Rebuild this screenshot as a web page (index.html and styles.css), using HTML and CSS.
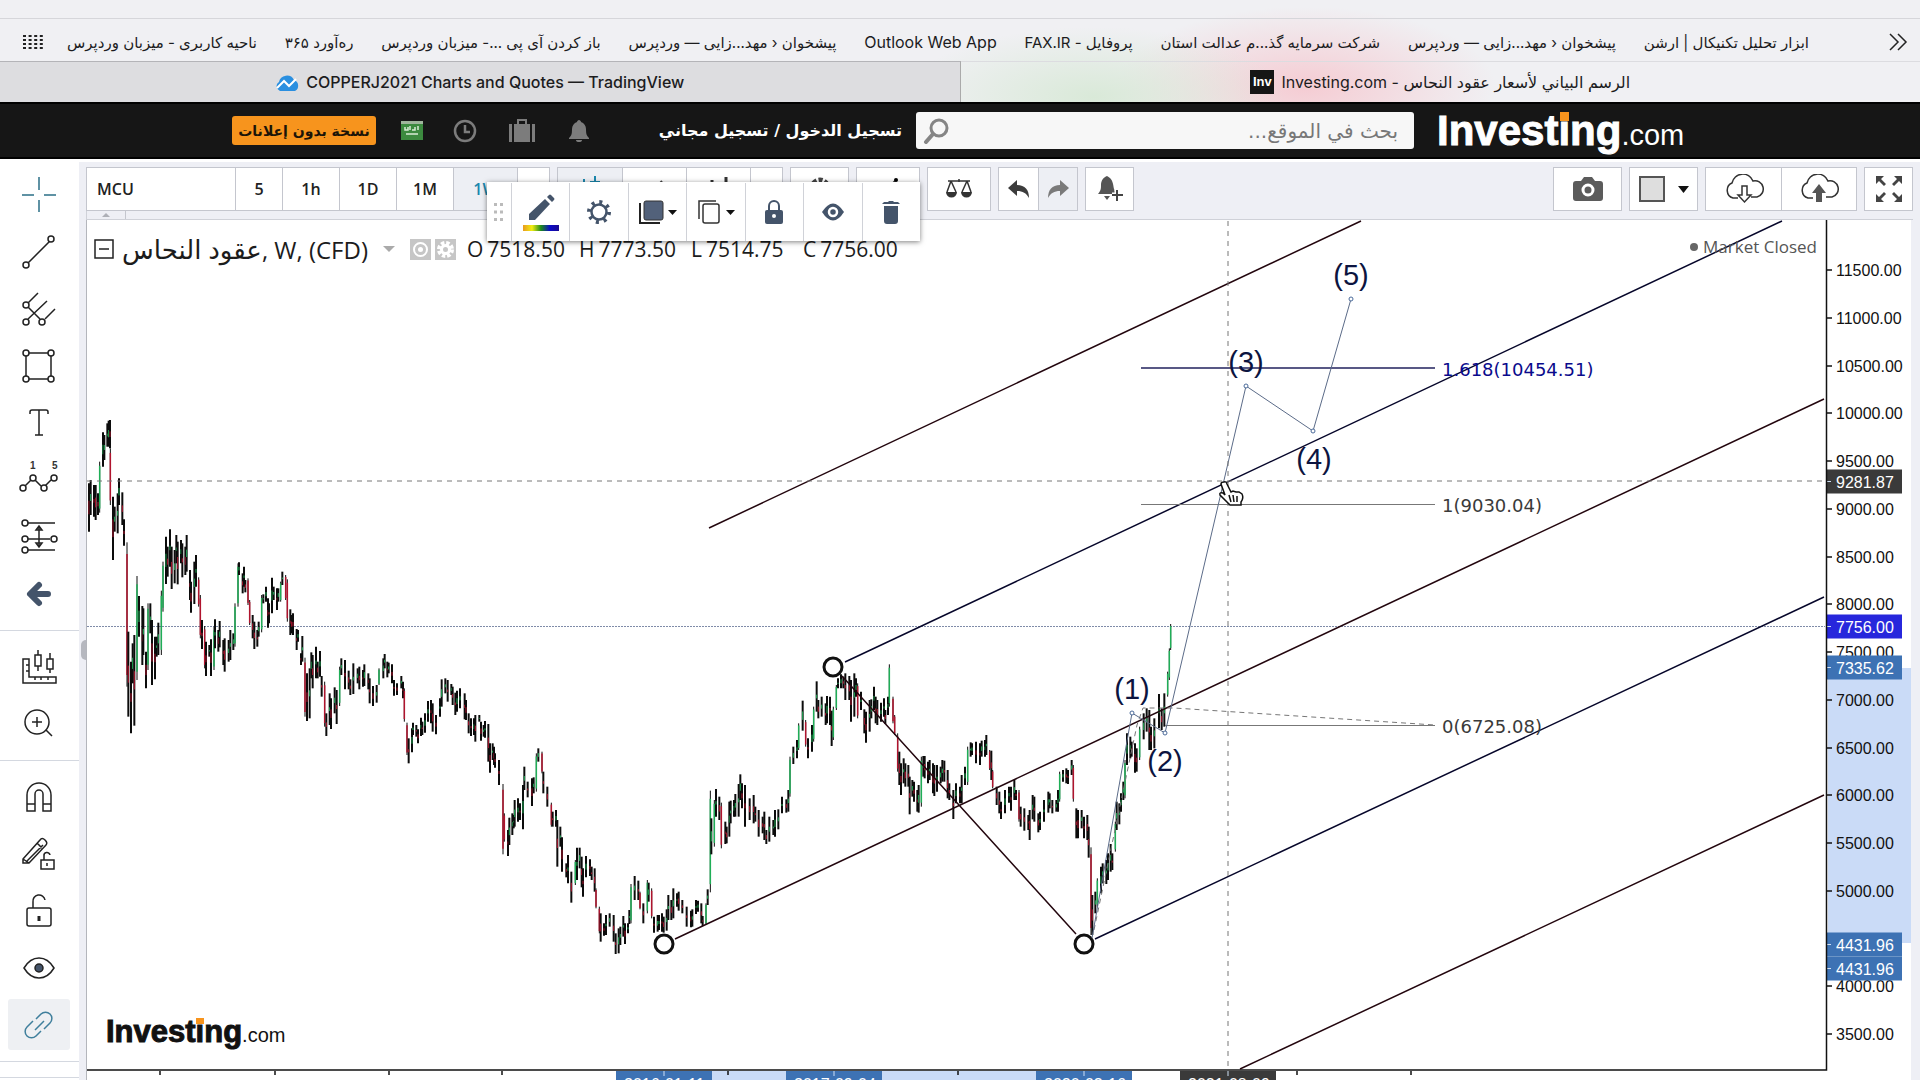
FILE: index.html
```
<!DOCTYPE html>
<html lang="ar">
<head>
    <meta charset="UTF-8">
    <title>Investing.com</title>
    <meta name="viewport" content="width=device-width">
    <link rel="stylesheet" href="styles.css">
</head>

<body>

<div class="browser">
    <nav class="bookmarks">
        <svg class="apps" width="22" height="16" viewBox="0 0 22 16"><path d="M1 2h20M1 6h20M1 10h20M1 14h20" stroke="#222" stroke-width="2" stroke-dasharray="3 2.6"/></svg>
        <div class="links">
            <a href="#" dir="rtl">ناحیه کاربری - میزبان وردپرس</a>
            <a href="#" dir="rtl">ره‌آورد ۳۶۵</a>
            <a href="#" dir="rtl">باز کردن آی پی ...- میزبان وردپرس</a>
            <a href="#" dir="rtl">پیشخوان ‹ مهد...زایی — وردپرس</a>
            <a href="#" class="latin">Outlook Web App</a>
            <a href="#" dir="rtl">پروفایل - FAX.IR</a>
            <a href="#" dir="rtl">شرکت سرمایه گذ...م عدالت استان</a>
            <a href="#" dir="rtl">پیشخوان ‹ مهد...زایی — وردپرس</a>
            <a href="#" dir="rtl">ابزار تحلیل تکنیکال | ارشن</a>
        </div>
        <svg class="more" width="20" height="18" viewBox="0 0 20 18"><path d="M2 1l8 8-8 8M10 1l8 8-8 8" fill="none" stroke="#222" stroke-width="1.5"/></svg>
    </nav>
    <div class="tabs">
        <a href="#" class="tab back">
            <svg width="24" height="20" viewBox="0 0 24 20"><path d="M5 19a5 5 0 0 1-1-9A8 8 0 0 1 19 8a6 6 0 0 1 1 11z" fill="#2a8fe0"/><path d="M2 16l7-7 5 5 7-7" fill="none" stroke="#fff" stroke-width="2"/></svg>
            <span>COPPERJ2021 Charts and Quotes — TradingView</span>
        </a>
        <a href="#" class="tab">
            <b class="inv">Inv</b>
            <span dir="rtl">الرسم البياني لأسعار عقود النحاس - Investing.com</span>
        </a>
    </div>
</div>

<header>
    <button class="noads">نسخة بدون إعلانات</button>
    <svg class="flag" width="22" height="19" viewBox="0 0 22 19"><path fill="#3c8a3f" d="M0 0h22v19H0z"/><path fill="#9fb59c" d="M0 0h22v3H0z"/><path d="M4 6v3h3V6M9 9V5M11 9h3V6M17 5v4M5 13h12" stroke="#d9ecd6" stroke-width="1.5" fill="none"/></svg>
    <svg class="clock" width="24" height="24" viewBox="0 0 24 24"><circle cx="12" cy="12" r="10" fill="none" stroke="#7c7c7c" stroke-width="2.5"/><path d="M12 6v7h5" fill="none" stroke="#7c7c7c" stroke-width="2.5"/></svg>
    <svg class="case" width="26" height="24" viewBox="0 0 26 24"><path d="M0 5h3v18H0zM5 5h16v18H5zM23 5h3v18h-3z" fill="#7c7c7c"/><path d="M9 5V1h8v4" fill="none" stroke="#7c7c7c" stroke-width="2"/></svg>
    <svg class="bell" width="22" height="24" viewBox="0 0 22 24"><path d="M11 1c1 0 2 1 2 2 3 1 5 4 5 7 0 6 1 7 3 9v1H1v-1c2-2 3-3 3-9 0-3 2-6 5-7 0-1 1-2 2-2zM8 21h6a3 2 0 0 1-6 0z" fill="#7c7c7c"/></svg>
    <a href="#" class="login" dir="rtl">تسجيل الدخول / تسجيل مجاني</a>
    <div class="search">
        <svg width="26" height="26" viewBox="0 0 26 26"><circle cx="16" cy="10" r="8" fill="none" stroke="#858585" stroke-width="3"/><path d="M10 16l-7 8" stroke="#858585" stroke-width="4" stroke-linecap="round"/></svg>
        <input type="text" dir="rtl" placeholder="بحث في الموقع..." aria-label="بحث في الموقع">
    </div>
    <a href="#" class="logo">Invest<span class="dot">i</span>ng<small>.com</small></a>
</header>

<div class="main">

<div class="tools">
    <div class="toolgroup">
        <button aria-label="cross"><svg viewBox="0 0 40 40"><path d="M20 2v13M20 25v12M3 20h12M25 20h12" stroke="#2b6f86" stroke-width="1.5"/></svg></button>
        <button aria-label="line"><svg viewBox="0 0 40 40"><path d="M9 31L31 9" /><circle cx="7" cy="33" r="3"/><circle cx="32" cy="7" r="3"/></svg></button>
        <button aria-label="fork"><svg viewBox="0 0 40 40"><path d="M9 14L19 4M9 30L28 12M9 18l12 12M26 30l10-10"/><circle cx="7" cy="16" r="3"/><circle cx="7" cy="33" r="3"/><circle cx="23" cy="33" r="3"/></svg></button>
        <button aria-label="rectangle"><svg viewBox="0 0 40 40"><path d="M10 7h19M10 33h19M7 10v20M32 10v20"/><circle cx="7" cy="7" r="3"/><circle cx="32" cy="7" r="3"/><circle cx="7" cy="33" r="3"/><circle cx="32" cy="33" r="3"/></svg></button>
        <button aria-label="text"><svg viewBox="0 0 40 40"><path d="M11 11V9q0-2 2-2h14q2 0 2 2v2M20 7v25M16 32h8"/></svg></button>
        <button aria-label="waves"><svg viewBox="0 0 40 40"><path d="M6 26l6-6M16 20l6 6M26 26l6-6"/><circle cx="4" cy="28" r="3"/><circle cx="14" cy="18" r="3"/><circle cx="25" cy="28" r="3"/><circle cx="35" cy="18" r="3"/><text x="11" y="9">1</text><text x="33" y="9">5</text></svg></button>
        <button aria-label="projection"><svg viewBox="0 0 40 40"><path d="M9 6h27M9 22h22M9 33h27M20 10v19M17 13l3-4 3 4zM17 26l3 4 3-4z"/><circle cx="6" cy="6" r="3"/><circle cx="6" cy="22" r="3"/><circle cx="35" cy="22" r="3"/><circle cx="6" cy="33" r="3"/></svg></button>
        <button aria-label="arrow"><svg viewBox="0 0 40 40"><path d="M20 11L11 20l9 9M12 20h17" stroke="#44546a" stroke-width="6" stroke-linecap="round" stroke-linejoin="round"/></svg></button>
    </div>
    <div class="toolgroup">
        <button aria-label="measure"><svg viewBox="0 0 40 40"><path d="M4 12h6v18h27v6H4zM10 18H7M10 24H7M16 30v3M22 30v3M29 30v3M19 3v5M19 19v5M16 8h6v11h-6zM31 6v6M31 22v4M28 12h6v10h-6z"/></svg></button>
        <button aria-label="zoom"><svg viewBox="0 0 40 40"><circle cx="18" cy="18" r="12"/><path d="M18 13v10M13 18h10M27 26l6 6"/></svg></button>
    </div>
    <div class="toolgroup">
        <button aria-label="magnet"><svg viewBox="0 0 40 40"><path d="M8 34V18a12 12 0 0 1 24 0v16h-8V17a4 4 0 0 0-8 0v17zM8 27h8M24 27h8"/></svg></button>
        <button aria-label="keep drawing"><svg viewBox="0 0 40 40"><path d="M4 25L21 6q2-3 5 0t1 5L10 29H4zM4 25l6 4M18 9l6 6M8 27L24 11M22 26h13v9H22zM25 26v-4a3 3 0 0 1 6-1M28 29v3"/></svg></button>
        <button aria-label="lock"><svg viewBox="0 0 40 40"><path d="M8 19q0-2 2-2h20q2 0 2 2v14q0 2-2 2H10q-2 0-2-2zM14 17v-6a6 6 0 0 1 12-2"/><path d="M20 25v5" stroke-width="3"/></svg></button>
        <button aria-label="hide"><svg viewBox="0 0 40 40"><path d="M5 20q6-10 15-10t15 10q-6 10-15 10T5 20z"/><circle cx="20" cy="20" r="4" style="fill:#44546a"/></svg></button>
        <button aria-label="link" class="on"><svg viewBox="0 0 40 40"><path d="M16 25l9-9M17 14l5-5a6 6 0 0 1 9 9l-6 6M22 26l-5 5a6 6 0 0 1-9-9l6-6" stroke="#3f7f9c"/></svg></button>
    </div>
    <div class="toolgroup"></div>
</div>

<div class="work">
    <div class="topbar">
        <div class="group">
            <input class="symbol" value="MCU" aria-label="symbol">
            <button class="w47">5</button>
            <button class="w57">1h</button>
            <button class="w57">1D</button>
            <button class="w57">1M</button>
            <button class="w64 active">1W</button>
            <button class="w32" aria-label="more"></button>
        </div>
        <div class="group">
            <button class="w64 active" aria-label="candles"><svg width="26" height="30" viewBox="0 0 26 30"><path d="M7 5v18M18 2v26M14 8h8v12h-8z" fill="none" stroke="#1b87ad" stroke-width="2"/></svg></button>
            <button class="w64" aria-label="compare"><svg width="26" height="30" viewBox="0 0 26 30"><path d="M3 22l9-6 8-9" fill="none" stroke="#444" stroke-width="2"/></svg></button>
            <button class="w64" aria-label="indicators"><svg width="26" height="30" viewBox="0 0 26 30"><path d="M6 6v18M13 11v13M20 3v21" fill="none" stroke="#333" stroke-width="3"/></svg></button>
            <button class="w32" aria-label="more"></button>
        </div>
        <div class="group">
            <button class="w57" aria-label="settings"><svg width="26" height="30" viewBox="0 0 26 30"><circle cx="13" cy="14" r="8" fill="none" stroke="#444" stroke-width="5" stroke-dasharray="4 2"/></svg></button>
        </div>
        <div class="group">
            <button class="w62" aria-label="templates"><svg width="26" height="30" viewBox="0 0 26 30"><path d="M3 22l9-6 8-9" fill="none" stroke="#444" stroke-width="2"/><circle cx="21" cy="6" r="2"/></svg></button>
        </div>
        <div class="group">
            <button class="w62" aria-label="scales"><svg width="28" height="24" viewBox="0 0 28 24"><path d="M3 4h22M14 2v3M6 4L2 15M6 4l5 11M22 4l-5 11M22 4l4 11" fill="none" stroke="#333" stroke-width="1.5"/><path d="M1 15h11a5 5 0 0 1-11 0zM16 15h11a5 5 0 0 1-11 0z" fill="#333"/></svg></button>
        </div>
        <div class="group">
            <button class="w39" aria-label="undo"><svg width="24" height="20" viewBox="0 0 24 20"><path d="M10 1v5c8 0 12 5 12 13-3-5-6-7-12-7v5L1 9z" fill="#3c3c3c"/></svg></button>
            <button class="w39 active" aria-label="redo"><svg width="24" height="20" viewBox="0 0 24 20"><path d="M14 1v5C6 6 2 11 2 19c3-5 6-7 12-7v5l9-8z" fill="#7a7a7a"/></svg></button>
        </div>
        <div class="group">
            <button class="w47" aria-label="add alert"><svg width="28" height="26" viewBox="0 0 28 26"><path d="M11 0c6 3 6 8 7 13l2 5H2c3-4 3-5 3-9 0-5 3-8 6-9zM8 20h6l-3 4z" fill="#555"/><path d="M21 14v11M16 19h11" stroke="#fff" stroke-width="5"/><path d="M21 14v11M16 19h11" stroke="#444" stroke-width="2"/></svg></button>
        </div>
        <div class="group push">
            <button class="w67" aria-label="snapshot"><svg width="30" height="24" viewBox="0 0 30 24"><path d="M3 4h5l3-4h8l3 4h5q3 0 3 3v14q0 3-3 3H3q-3 0-3-3V7q0-3 3-3z" fill="#5b5b5b"/><circle cx="15" cy="13" r="5" fill="none" stroke="#fff" stroke-width="3"/></svg></button>
        </div>
        <div class="group">
            <button class="w67" aria-label="background"><svg width="50" height="26" viewBox="0 0 50 26"><path d="M1 1h24v24H1z" fill="#dedede" stroke="#555" stroke-width="2"/><path d="M39 10h11l-5.500 7z" fill="#111"/></svg></button>
        </div>
        <div class="group">
            <button class="w75" aria-label="load"><svg width="40" height="30" viewBox="0 0 40 30"><path d="M14 24H9a8 8 0 0 1-1-15 11 11 0 0 1 21-2 8 8 0 0 1 4 16h-6" fill="none" stroke="#333" stroke-width="1.5"/><path d="M18 12h5v9h4l-6.500 7L14 21h4z" fill="#fff" stroke="#333" stroke-width="1.500"/></svg></button>
            <button class="w75" aria-label="save"><svg width="40" height="30" viewBox="0 0 40 30"><path d="M14 24H9a8 8 0 0 1-1-15 11 11 0 0 1 21-2 8 8 0 0 1 4 16h-6" fill="none" stroke="#333" stroke-width="1.5"/><path d="M20 10l7 9h-4v9h-6v-9h-4z" fill="#555"/></svg></button>
        </div>
        <div class="group">
            <button class="w47" aria-label="full screen"><svg width="28" height="28" viewBox="0 0 28 28"><path d="M1 9V1h8L6 4l5 5-2 2-5-5zM27 9V1h-8l3 3-5 5 2 2 5-5zM1 19v8h8l-3-3 5-5-2-2-5 5zM27 19v8h-8l3-3-5-5 2-2 5 5z" fill="#444"/></svg></button>
        </div>
    </div>
    <div class="fold"><button aria-label="collapse"></button></div>
    <span class="handle"></span>

    <div class="chart">
        <svg id="chart" viewBox="87 220 1824 860" preserveAspectRatio="xMinYMin slice">
            <rect class="range" x="1828" y="668" width="83" height="275"/>
            <path class="range" d="M712 1071h74v9h-74zM882 1071h155v9H882z"/>
            <g id="axis"></g>
            <path d="M87 626.5h1738" stroke="#7f8ba8" stroke-dasharray="2 1"/>
            <g id="bars"></g>

            <g class="channel">
                <path class="red" d="M709 528L1361 221M675 939L1824 399M1240 1069L1824 795M842 676L1076 934"/>
                <path class="blue" d="M845 662L1782 221M1095 939L1824 597"/>
            </g>
            <g class="handles">
                <circle cx="833" cy="667" r="9"/><circle cx="664" cy="944" r="9"/><circle cx="1084" cy="944" r="9"/>
            </g>

            <path class="level blue" d="M1141 368h294"/>
            <path class="level" d="M1141 504.500h294M1165 725.500h270"/>
            <path class="dash" d="M1094 930L1137 725l6-17h31L1435 725"/>
            <g class="leveltext">
                <text x="1442" y="376" fill="#0a0a8c">1.618(10454.51)</text>
                <text x="1442" y="512">1(9030.04)</text>
                <text x="1442" y="733">0(6725.08)</text>
            </g>

            <path class="wave" d="M1092 938L1132 713l33 20 81-347 67 45 38-132"/>
            <g class="wavedots"><circle cx="1132" cy="713" r="2"/><circle cx="1165" cy="733" r="2"/><circle cx="1246" cy="386" r="2"/><circle cx="1313" cy="431" r="2"/><circle cx="1351" cy="299" r="2"/></g>
            <g class="wavetext">
                <text x="1132" y="699">(1)</text>
                <text x="1165" y="771">(2)</text>
                <text x="1246" y="372">(3)</text>
                <text x="1314" y="469">(4)</text>
                <text x="1351" y="285">(5)</text>
            </g>

            <path class="cross" d="M87 481h1738M1228 221v849"/>
            <path d="M1224 482q2-1 3 2l4 8 2-1 3 1 3 0 3 2q2 4-1 8v3h-11l-10-10q-1-3 3-2l2 2-4-11q0-2 3-2zM1229 495l2 7M1233 495l1 7M1237 496v6" fill="#fff" stroke="#111" stroke-width="1.500"/>
        </svg>

        <div class="legend">
            <svg width="20" height="20" viewBox="0 0 20 20"><path d="M1 1h18v18H1zM5 10h10" fill="none" stroke="#222" stroke-width="1.500"/></svg>
            <span class="name"><bdi>عقود النحاس</bdi>, W, (CFD)</span>
            <i class="caret"></i>
            <svg class="eye" width="21" height="21" viewBox="0 0 21 21"><path fill="#c6c6c6" d="M0 0h21v21H0z"/><circle cx="10.500" cy="10.500" r="6.500" fill="none" stroke="#fff" stroke-width="2"/><circle cx="10.500" cy="10.500" r="2.500" fill="#fff"/></svg>
            <svg class="gear" width="21" height="21" viewBox="0 0 21 21"><path fill="#c6c6c6" d="M0 0h21v21H0z"/><circle cx="10.500" cy="10.500" r="6" fill="none" stroke="#fff" stroke-width="5" stroke-dasharray="3 1.700"/><circle cx="10.500" cy="10.500" r="4" fill="none" stroke="#fff" stroke-width="3"/></svg>
            <span class="val"><b>O</b>7518.50</span>
            <span class="val"><b>H</b>7773.50</span>
            <span class="val"><b>L</b>7514.75</span>
            <span class="val"><b>C</b>7756.00</span>
        </div>
        <div class="closed"><i></i>Market Closed</div>
        <div class="logo dark">Invest<span class="dot">i</span>ng<small>.com</small></div>
    </div>

    <div class="floating">
        <svg class="grip" width="10" height="18" viewBox="0 0 10 18"><path d="M0 1.500h10M0 9h10M0 16.500h10" stroke="#bbb" stroke-width="3" stroke-dasharray="3 3"/></svg>
        <button aria-label="colour"><svg width="36" height="38" viewBox="0 0 36 38"><defs><linearGradient id="rb"><stop offset="0" stop-color="#e89a20"/><stop offset=".25" stop-color="#f2ee10"/><stop offset=".5" stop-color="#1c8a1c"/><stop offset=".75" stop-color="#0a0ac8"/><stop offset="1" stop-color="#1a0a90"/></linearGradient></defs><path d="M6 27v-6L22 6l5 5-15 16zM24 4l2-2q1-1 2 0l3 3q1 1 0 2l-2 2z" fill="#44546a"/><path d="M0 32h36v6H0z" fill="url(#rb)"/></svg></button>
        <button aria-label="format"><svg width="26" height="26" viewBox="0 0 26 26"><circle cx="13" cy="13" r="7.500" fill="none" stroke="#44546a" stroke-width="2.500"/><circle cx="13" cy="13" r="10" fill="none" stroke="#44546a" stroke-width="4" stroke-dasharray="3 4.850"/></svg></button>
        <button aria-label="order"><svg width="38" height="24" viewBox="0 0 38 24"><path d="M1 3v20h20" fill="none" stroke="#222" stroke-width="2"/><rect x="5" y="1" width="19" height="19" rx="2" fill="#52617a" stroke="#333"/><path d="M29 10h9l-4.500 5z" fill="#111"/></svg></button>
        <button aria-label="clone"><svg width="38" height="24" viewBox="0 0 38 24"><path d="M2 19V1h17" fill="none" stroke="#333" stroke-width="1.500"/><rect x="6" y="4" width="16" height="19" rx="2" fill="#fff" stroke="#333" stroke-width="1.500"/><path d="M29 10h9l-4.500 5z" fill="#111"/></svg></button>
        <button aria-label="lock"><svg width="20" height="24" viewBox="0 0 20 24"><path d="M5 10V6a5 5 0 0 1 10 0v4" fill="none" stroke="#44546a" stroke-width="2"/><rect x="1" y="10" width="18" height="14" rx="2" fill="#44546a"/><circle cx="10" cy="16" r="2" fill="#fff"/></svg></button>
        <button aria-label="hide"><svg width="24" height="18" viewBox="0 0 24 18"><path d="M1 9q11-17 22 0-11 17-22 0z" fill="#44546a"/><circle cx="12" cy="9" r="4" fill="none" stroke="#fff" stroke-width="2.500"/></svg></button>
        <button aria-label="delete"><svg width="20" height="24" viewBox="0 0 20 24"><path d="M1 4l2-2h4l1-1h4l1 1h4l2 2zM3 6h14v15q0 3-3 3H6q-3 0-3-3z" fill="#44546a"/></svg></button>
    </div>
</div>
</div>

<script>

var NS = 'http://www.w3.org/2000/svg';
var axis = document.getElementById('axis');
var bars = document.getElementById('bars');

function add(parent, tag, attrs, text)
{
    var el = document.createElementNS(NS, tag);
    for (var k in attrs) el.setAttribute(k, attrs[k]);
    if (text) el.textContent = text;
    parent.appendChild(el);
}

// price scale
for (var p = 11500, y = 270; p >= 3500; p -= 500, y += 47.75)
{
    var ty = Math.round(y);
    add(axis, 'path', {d: 'M1827 ' + ty + 'h5', 'class': 'line'});
    if (p != 4500) add(axis, 'text', {x: 1836, y: ty + 6}, p + '.00');
}

var tags = [[481.5, '9281.87', '#3a3a3a'], [626.5, '7756.00', '#2727dc'], [667.5, '7335.62', '#3d72b4'],
            [944.5, '4431.96', '#3d72b4'], [968.5, '4431.96', '#3d72b4']];
tags.forEach(function (t)
{
    add(axis, 'rect', {x: 1827, y: t[0] - 12, width: 75, height: 24, fill: t[2]});
    add(axis, 'text', {x: 1836, y: t[0] + 6, 'class': 'tag'}, t[1]);
    add(axis, 'path', {d: 'M1827 ' + t[0] + 'h4', stroke: '#cfe0f5'});
});

// time scale
var dates = [[616, '2016-01-11', '#3d72b4'], [786, '2017-09-04', '#3d72b4'], [1036, '2020-03-16', '#3d72b4'], [1180, '2021-08-09', '#3a3a3a']];
dates.forEach(function (d)
{
    add(axis, 'rect', {x: d[0], y: 1071, width: 96, height: 24, fill: d[2]});
    add(axis, 'path', {d: 'M' + (d[0] + 48) + ' 1071v5', stroke: '#cfe0f5'});
    add(axis, 'text', {x: d[0] + 8, y: 1090, 'class': 'tag'}, d[1]);
});
[160, 275, 389, 502, 728, 958, 1297, 1411].forEach(function (x)
{
    add(axis, 'path', {d: 'M' + x + ' 1071v4', 'class': 'line'});
});
add(axis, 'path', {d: 'M87 1070H1826.500V220', 'class': 'line'});

// weekly bars: x, high, low (thirds of a unit from the part's origin), g / r for a long body
var parts = [
  {x: 80, y: 400, d: '27,250,395 32,240,345 42,255,350 47,255,360 54,280,345 59,185,338g 69,97,200 73,105,180 82,70,140 86,62,140 90,60,145 91,145,315r 99,290,480 104,320,395 113,280,400 117,235,315 127,277,375 132,358,437 141,427,860r 145,695,950 153,785,1000 158,730,850 163,705,977 171,528,840g 177,588,710 187,618,795 190,625,765 198,755,865 204,610,810g 211,610,700 216,660,855 225,710,838 230,710,770 235,668,765 244,572,765g 249,485,635g 258,410,552 263,440,530 270,388,500 275,440,567 284,450,550 289,405,490 293,425,553 303,420,490 307,430,532 316,440,525 320,405,515 330,510,600 333,545,638 343,485,612 348,465,560 356,532,620r 361,585,715r 366,660,747 374,678,805r 378,725,828 388,735,770 393,718,828 402,680,810g 405,658,745 415,690,755 419,663,742 430,720,795 434,715,815 446,720,785 451,690,780 460,700,750 465,610,740g 474,490,620g 477,487,525 488,520,580 492,500,560 496,540,577 504,535,615r 509,600,675r 518,645,715 523,665,747 532,690,740 536,665,710 545,585,697g 550,583,610 558,560,605 564,595,683 567,610,670 576,533,640 581,560,600 591,565,630 595,565,605 602,545,605g 607,515,555 617,525,600r 622,538,665r 631,628,705 635,645,700 639,640,705 650,687,750 654,690,725 663,760,795 667,708,785 675,773,950r 681,820,963 689,805,955 694,757,835 698,765,865 708,740,835 713,785,835 720,753,830 725,828,890 734,845,980r 739,940,1008 749,880,975 753,895,987 764,862,940 770,870,972 779,800,918g 784,775,825 795,780,868 806,812,868 811,838,885 820,790,882 833,805,850 838,800,868 849,810,860 853,793,858 865,820,868 869,835,910 879,858,918 890,855,908 897,805,855g 910,775,835 914,762,805 922,785,832 926,788,820 936,793,850 942,840,887 951,850,885 964,828,865 969,845,895 973,865,965r 981,968,1065r 986,1015,1090 996,985,1057 999,968,1005 1009,975,1010 1014,988,1030 1023,953,1008 1027,965,1005 1035,940,998 1044,903,965 1053,900,970 1058,910,995 1068,945,1003 1080,895,950 1085,838,920 1096,835,880 1103,840,905 1114,852,885 1118,860,915 1126,878,945 1131,872,935 1140,865,925 1154,880,958 1158,900,960 1166,940,1000 1173,955,1008 1182,955,1005 1186,945,1025 1198,945,965 1203,965,1022 1211,975,1010 1215,963,1013 1225,972,1085 1230,1030,1118 1238,1030,1080 1242,1040,1095 1245,1060,1103 1257,1080,1155'},
  {x: 460, y: 640, d: '129,432,643r 133,520,605r 144,570,648 148,533,615 157,520,585 161,525,565 164,480,560 174,475,545 180,490,540 189,435,568 193,380,450 203,425,472 216,415,498 221,412,460 229,340,455g 235,325,365 246,335,400r 250,395,460 262,440,500 274,488,560r 278,515,560 288,510,560 292,540,680 301,560,620 306,592,695 319,670,712 324,645,730 334,695,788 346,660,735g 351,623,720 359,623,685 365,650,742 369,685,770 378,648,712 390,658,708 395,680,720 404,685,755 408,745,805r 418,800,880r 422,820,905 432,850,887 438,825,885 449,820,860 461,825,905 467,880,942 476,865,940 481,860,915 490,828,890 495,850,912 504,850,880 508,810,852 513,732,850g 524,708,780 535,722,780 540,755,808r 550,790,850 562,720,820g 566,728,785 575,745,835r 582,830,878 593,825,875 597,825,870 606,820,875 611,830,878 620,808,872 625,765,840 634,780,840 640,745,835 651,760,800 656,755,812 667,780,820 680,800,860 693,812,862 697,808,860 708,780,822 714,782,815 724,790,850 728,828,858 738,790,855g 743,748,795 751,452,757g 754,535,643 763,480,620g 768,447,530 778,470,540 784,488,625r 796,545,612 800,560,610 808,485,590 812,482,550 822,480,530 826,462,530 836,432,530 841,403,480 846,430,505 855,435,560 869,475,540 881,465,550 886,500,545 896,510,590 908,530,580 913,515,600 919,570,612 928,530,605 940,540,585 945,510,590 955,508,568 966,470,520 979,478,518 985,450,515 990,350,470g 1000,320,372 1011,300,355 1016,250,330g 1028,182,272 1037,240,320r 1044,295,355 1056,255,335 1061,200,305g 1070,124,215 1075,180,235 1085,170,230 1097,190,255 1101,168,250 1110,170,255 1115,212,318 1120,200,300g 1129,135,210g 1134,115,145'},
  {x: 800, y: 620, d: '123,163,205 130,170,205 136,160,240 148,168,240 153,180,305 163,160,290 168,175,230 173,190,295r 183,215,270 193,268,340 198,275,368 209,240,335 214,238,295 222,200,270 227,230,310 232,240,315 243,248,305 252,235,290 256,270,312 264,230,285 268,133,260g 279,230,310r 284,285,345r 293,340,455r 298,395,495 303,430,525 311,415,490 316,430,500 325,435,500 329,470,583 337,480,530 342,485,545 352,510,575 356,495,578 364,410,560g 370,408,470 374,408,475 384,425,490 389,420,480 399,430,520 403,435,528 411,435,515 422,440,490 427,420,485 433,422,485 443,450,535 448,490,540 460,510,597 468,490,550 480,500,550 485,465,550 495,440,495 503,380,495g 512,367,410 516,370,405 528,365,430 540,370,435 545,362,410 555,360,410 559,345,405 569,390,450r 574,392,480 578,450,505r 590,500,555 598,515,580 603,545,597 615,510,580 627,500,548 633,500,572 643,480,540 648,510,540 657,510,605r 662,560,620 673,565,632 685,585,630 689,570,660 698,525,598 703,530,605 715,580,637 720,575,630 732,540,605 745,515,578 749,520,565 757,540,580 769,540,575 774,510,575 779,455,545g 789,450,485 799,445,490 804,450,492 815,420,465 820,435,545r 829,565,655 834,570,655 845,570,625 852,590,655 862,585,660 866,620,713 873,682,945r 877,825,945 886,815,880 892,775,860g 903,740,820 908,730,790 919,720,792 924,700,780 932,672,755 937,700,750 946,605,695g 950,545,630 958,550,613 963,520,575 970,485,540 975,420,535g 981,340,435 991,350,415 995,365,410 1005,370,458 1010,385,455 1019,320,420g 1031,280,358 1040,265,335 1048,270,390 1053,320,390 1063,295,385 1077,222,325 1085,265,330 1093,220,320 1103,155,230g 1108,85,180g 1112,12,90g'}
];

var prev = 0;
parts.forEach(function (part)
{
    part.d.split(' ').forEach(function (s, i)
    {
        var v = s.split(',').map(parseFloat);
        var x = part.x + v[0] / 3, hi = part.y + v[1] / 3, lo = part.y + v[2] / 3;
        var mid = (hi + lo) / 2, h = lo - hi;
        var mark = s.slice(-1);
        var big = mark == 'g' || mark == 'r';
        var up = mark == 'g' || (!big && mid < prev);
        var cut = big ? 0.08 : 0.36 + (i % 3) * 0.04;
        add(bars, 'path', {d: 'M' + x + ' ' + hi + 'V' + lo, 'class': 'wick' + (big ? ' thin' : '')});
        add(bars, 'path', {d: 'M' + x + ' ' + (hi + h * cut) + 'V' + (lo - h * cut), 'class': up ? 'up' : 'down'});
        prev = mid;
    });
});

</script>

</body>

</html>
```
FILE: styles.css
```
* {box-sizing: border-box;}

body {margin: 0;
      height: 100vh;
      display: flex;
      flex-direction: column;
      overflow: hidden;
      font-family: "Open Sans", "DejaVu Sans", sans-serif;
      background: #fff;}

a {color: inherit; text-decoration: none;}
button {margin: 0; padding: 0; border: 0; background: none; font: inherit; color: inherit;}
svg {display: block; flex: none;}

/* browser bars */
.browser {height: 102px;
          flex: none;
          font-family: Inter, "DejaVu Sans", sans-serif;
          color: #1c1c1e;
          background:
            radial-gradient(ellipse 190px 70px at 57% 95%, #d9e9d8, transparent),
            radial-gradient(ellipse 190px 80px at 68% 85%, #f5ccd3, transparent),
            #f0f0f3;}
.bookmarks {display: flex;
            align-items: center;
            height: 43px;
            margin-top: 18px;
            padding: 4px 12px 0 22px;
            border-top: 1px solid #d6d6da;
            font-size: 15px;}
.links {flex: 1;
        display: flex;
        align-items: center;
        justify-content: space-between;
        white-space: nowrap;
        padding: 0 79px 0 23px;}
.latin {font-size: 16px;}
.tabs {display: flex; height: 41px;}
.tab {flex: 1;
      display: flex;
      align-items: center;
      justify-content: center;
      gap: 7px;
      font-size: 16px;
      border-top: 1px solid #dcdce0;}
.tab.back {background: #dddde0; border-top-color: #b4b4b8; border-right: 1px solid #aaa; font-weight: 500;}
.inv {width: 24px;
      height: 24px;
      background: #161616;
      color: #fff;
      font: bold 13px/24px "Liberation Sans", sans-serif;
      text-align: center;}

/* site header */
header {height: 57px;
        flex: none;
        display: flex;
        align-items: center;
        padding-left: 232px;
        background: #161616;
        border-top: 2px solid #000;
        border-bottom: 2px solid #000;
        color: #fff;}
.noads {width: 144px;
        height: 29px;
        flex: none;
        border-radius: 3px;
        background: #f7941d;
        color: #1c1408;
        font: bold 14px/28px "DejaVu Sans", sans-serif;
        white-space: nowrap;}
.flag {margin-left: 25px;}
.clock {margin-left: 30px;}
.case {margin-left: 32px;}
.bell {margin-left: 33px;}
.login {width: 312px;
        flex: none;
        font: bold 16px "DejaVu Sans", sans-serif;
        white-space: nowrap;}
.search {width: 498px;
         height: 37px;
         flex: none;
         margin-left: 14px;
         padding: 0 14px 0 7px;
         display: flex;
         align-items: center;
         border-radius: 3px;
         background: #f7f7f7;}
.search input {flex: 1;
               min-width: 0;
               border: 0;
               outline: 0;
               background: none;
               font: 20px "DejaVu Sans", sans-serif;}
.search input::placeholder {color: #777;}

.logo {margin-left: 23px;
       font: bold 42px/50px "Liberation Sans", sans-serif;
       white-space: nowrap;
       -webkit-text-stroke: 1px;}
.logo small {font: 29px "Liberation Sans", sans-serif;
             -webkit-text-stroke: 0;}
.dot {position: relative;}
.dot::after {content: "";
             position: absolute;
             left: 10%;
             top: 12%;
             width: 85%;
             height: 18%;
             background: #f7941d;}

/* drawing tools */
.main {flex: 1; min-height: 0; display: flex;}
.tools {width: 79px; flex: none; overflow: hidden;}
.toolgroup {padding: 7px 8px 8px;
            border-bottom: 1px solid #d4d8e0;}
.toolgroup button {display: flex;
                   align-items: center;
                   justify-content: center;
                   width: 62px;
                   height: 57px;}
.toolgroup svg {width: 40px; height: 40px; fill: none; stroke: #222; stroke-width: 1.5;}
.toolgroup circle {fill: #fff;}
.toolgroup text {font: bold 10px "Liberation Sans", sans-serif; fill: #333; stroke: none;}
.toolgroup .on {height: 51px; margin: 3px 0; background: #eef0f3; border-radius: 3px;}

/* chart column */
.work {flex: 1;
       min-width: 0;
       position: relative;
       display: flex;
       flex-direction: column;
       margin-top: 3px;
       padding: 5px 7px 0 7px;
       background: #eeeff5;}
.topbar {display: flex; gap: 7px; height: 44px; flex: none;}
.push {margin-left: auto;}
.group {display: flex;
        background: #fff;
        border: 1px solid #c4c6ce;
        font-size: 16px;
        font-weight: 600;}
.group button {display: flex; align-items: center; justify-content: center; height: 42px; color: #222;}
.group button + button, .symbol + button {border-left: 1px solid #c4c6ce;}
.group .active {background: #edeff4; color: #1b87ad;}
.symbol {width: 148px;
         padding: 0 10px;
         border: 0;
         background: none;
         font: inherit;
         color: #222;}
.w32 {width: 32px;}
.w39 {width: 39px;}
.w47 {width: 47px;}
.w57 {width: 57px;}
.w62 {width: 62px;}
.w64 {width: 64px;}
.w67 {width: 67px;}
.w75 {width: 75px;}

.fold {height: 9px; flex: none; border: 1px solid #cfd1d8; border-top: 0; border-right: 0;}
.fold button {display: block;
              width: 39px;
              height: 8px;
              border-right: 1px solid #c4c6ce;}
.fold button::before {content: "";
                      display: block;
                      width: 0;
                      margin: 0 auto;
                      border: 4px solid transparent;
                      border-top: 0;
                      border-bottom-color: #aeb0b7;}
.handle {position: absolute;
         left: 2px;
         top: 478px;
         width: 5px;
         height: 20px;
         border-radius: 5px 0 0 5px;
         background: #b6b8bf;}

.chart {flex: 1;
        min-height: 0;
        position: relative;
        background: #fff;
        border-left: 1px solid #b4b6bc;
        margin-right: 2px;}
#chart {width: 100%; height: 100%;}
.range {fill: #cadbf7;}
.line {stroke: #111; stroke-width: 1.5; fill: none;}
#axis text {font: 16px "Liberation Sans", sans-serif; fill: #111;}
#axis .tag {fill: #fff;}
.wick {stroke: #0c0c0c; stroke-width: 2;}
.wick.thin {stroke-width: 1;}
.up {stroke: #1fae57; stroke-width: 1;}
.down {stroke: #b0142e; stroke-width: 1;}
.thin + .up, .thin + .down {stroke-width: 1.5;}
.channel path {stroke-width: 1.5;}
.channel .red {stroke: #23060e;}
.channel .blue {stroke: #06062a;}
.handles circle {fill: #fff; stroke: #111; stroke-width: 3;}
.level {stroke: #777;}
.level.blue {stroke: #20205c; stroke-width: 1.5;}
.dash {fill: none; stroke: #777; stroke-dasharray: 5 4;}
.leveltext {font: 18px "DejaVu Sans", sans-serif; fill: #3a3a3a;}
.wave {fill: none; stroke: #5b6b88;}
.wavedots {fill: #fff; stroke: #4a6a9a;}
.wavetext {font: 29px "Liberation Sans", sans-serif; fill: #0c1440; text-anchor: middle;}
.cross {stroke: #777; stroke-dasharray: 5 5;}

.legend {position: absolute;
         left: 7px;
         top: 14px;
         display: flex;
         align-items: center;
         height: 30px;
         font-size: 21px;
         color: #1c1c1c;
         white-space: nowrap;}
.name {margin-left: 8px; width: 254px; font-size: 24px;}
.name bdi {font-size: 26px;}
.caret {margin: 0 15px 0 7px;
        border: 6px solid transparent;
        border-top-color: #aaa;
        border-bottom: 0;}
.gear {margin: 0 11px 0 4px;}
.val {width: 112px;}
.val b {font-weight: normal; margin-right: 4px;}
.closed {position: absolute;
         right: 94px;
         top: 15px;
         display: flex;
         align-items: center;
         gap: 5px;
         font-size: 17px;
         color: #555;}
.closed i {width: 8px; height: 8px; border-radius: 50%; background: #666;}
.logo.dark {position: absolute;
            left: 19px;
            bottom: 28px;
            margin: 0;
            font-size: 31px;
            line-height: 40px;
            color: #111;}
.logo.dark small {font-size: 20px;}

/* toolbar of the selected drawing */
.floating {position: absolute;
           left: 408px;
           top: 20px;
           width: 433px;
           height: 59px;
           display: flex;
           align-items: center;
           background: #fff;
           box-shadow: 0 1px 5px rgba(0, 0, 0, .5);}
.grip {margin: 0 7px;}
.floating button {flex: 1;
                  display: flex;
                  align-items: center;
                  justify-content: center;
                  height: 58px;
                  border-left: 1px solid #d0d2d8;}
```
